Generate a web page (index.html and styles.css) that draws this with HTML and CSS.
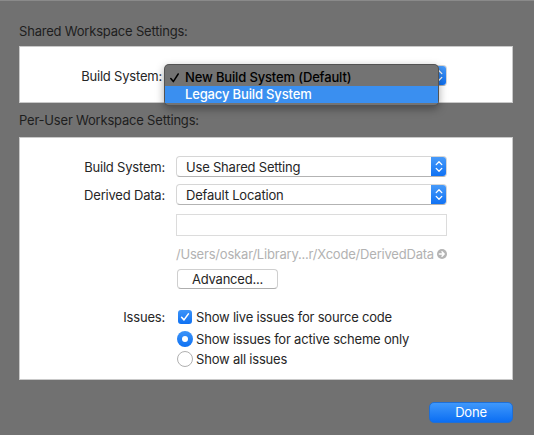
FILE: index.html
```html
<!DOCTYPE html>
<html>
<head>
<meta charset="utf-8">
<link rel="stylesheet" href="styles.css">
</head>
<body>
<div class="window">
  <div class="section-title">Shared Workspace Settings:</div>
  <div class="box box-shared">
    <div class="row">
      <span class="label label-shared">Build System:</span>
      <div class="popup">
        <span class="popup-text"></span>
        <span class="stepper">
          <svg width="16" height="21" viewBox="0 0 16 21"><path d="M5.2 8.6 L8 5.8 L10.8 8.6 M5.2 12.4 L8 15.2 L10.8 12.4" fill="none" stroke="#fff" stroke-width="1.3" stroke-linecap="round" stroke-linejoin="round"/></svg>
        </span>
      </div>
    </div>
    <div class="menu">
      <div class="menu-item"><span class="check"><svg width="9" height="10" viewBox="0 0 9 10"><path d="M0.8 5.6 L3.3 8.6 L8.2 1" fill="none" stroke="#000" stroke-width="1.5" stroke-linecap="round" stroke-linejoin="round"/></svg></span>New Build System (Default)</div>
      <div class="menu-item selected"><span class="check"></span>Legacy Build System</div>
    </div>
  </div>

  <div class="section-title title-user">Per-User Workspace Settings:</div>
  <div class="box box-user">
    <div class="row">
      <span class="label">Build System:</span>
      <div class="popup">
        <span class="popup-text">Use Shared Setting</span>
        <span class="stepper">
          <svg width="16" height="21" viewBox="0 0 16 21"><path d="M5.2 8.6 L8 5.8 L10.8 8.6 M5.2 12.4 L8 15.2 L10.8 12.4" fill="none" stroke="#fff" stroke-width="1.3" stroke-linecap="round" stroke-linejoin="round"/></svg>
        </span>
      </div>
    </div>
    <div class="row row-derived">
      <span class="label">Derived Data:</span>
      <div class="popup">
        <span class="popup-text">Default Location</span>
        <span class="stepper">
          <svg width="16" height="21" viewBox="0 0 16 21"><path d="M5.2 8.6 L8 5.8 L10.8 8.6 M5.2 12.4 L8 15.2 L10.8 12.4" fill="none" stroke="#fff" stroke-width="1.3" stroke-linecap="round" stroke-linejoin="round"/></svg>
        </span>
      </div>
    </div>
    <div class="row row-field">
      <span class="label"></span>
      <div class="textfield"></div>
    </div>
    <div class="row row-path">
      <span class="label"></span>
      <div class="path">
        <span>/Users/oskar/Library...r/Xcode/DerivedData</span>
        <svg class="go" width="10" height="10" viewBox="0 0 10 10"><circle cx="5" cy="5" r="5" fill="#b4b4b4"/><path d="M2.3 5 H7.2 M5 2.8 L7.2 5 L5 7.2" fill="none" stroke="#fff" stroke-width="1.4" stroke-linecap="round" stroke-linejoin="round"/></svg>
      </div>
    </div>
    <div class="row row-adv">
      <span class="label"></span>
      <div class="button">Advanced...</div>
    </div>
    <div class="row row-issues">
      <span class="label">Issues:</span>
      <div class="option">
        <span class="checkbox"><svg width="14" height="14" viewBox="0 0 14 14"><path d="M3.6 7.3 L6 9.9 L10.4 3.9" fill="none" stroke="#fff" stroke-width="1.6" stroke-linecap="round" stroke-linejoin="round"/></svg></span>
        <span>Show live issues for source code</span>
      </div>
    </div>
    <div class="row row-radio1">
      <span class="label"></span>
      <div class="option">
        <span class="radio on"></span>
        <span>Show issues for active scheme only</span>
      </div>
    </div>
    <div class="row row-radio2">
      <span class="label"></span>
      <div class="option">
        <span class="radio"></span>
        <span>Show all issues</span>
      </div>
    </div>
  </div>

  <div class="footer">
    <div class="done">Done</div>
  </div>
</div>
</body>
</html>
```

FILE: styles.css
```css
html, body {
  margin: 0;
  padding: 0;
}

body {
  background: #717171;
  font-family: Inter, "Noto Sans", "Liberation Sans", sans-serif;
  font-size: 13px;
  letter-spacing: -0.2px;
  color: #262626;
}

.window {
  width: 534px;
  height: 435px;
  box-sizing: border-box;
  border-top: 1px solid #8a8a8a;
  padding: 22px 21px 0 19px;
}

.section-title {
  line-height: 16px;
  height: 16px;
  color: #1e1e1e;
}

.title-user {
  margin-top: 9px;
}

.box {
  background: #fff;
  border: 1px solid #c9c9c9;
  margin-top: 7px;
  box-sizing: border-box;
}

.box-shared {
  position: relative;
  height: 57px;
  padding-top: 18px;
}

.box-user {
  height: 243px;
  margin-top: 9px;
  padding-top: 18px;
}

.row {
  display: flex;
  align-items: center;
}

.label {
  width: 145px;
  flex: none;
  text-align: right;
  margin-right: 11px;
  line-height: 16px;
}

.label-shared {
  width: 142px;
  margin-right: 14px;
}

.popup {
  width: 271px;
  height: 21px;
  box-sizing: border-box;
  background: #fff;
  border: 1px solid #d6d6d6;
  border-bottom-color: #b3b3b3;
  border-radius: 4px;
  display: flex;
  align-items: center;
  justify-content: space-between;
  overflow: hidden;
}

.popup-text {
  padding-left: 9px;
  line-height: 16px;
}

.stepper {
  width: 16px;
  height: 21px;
  margin-right: -1px;
  margin-top: -1px;
  margin-bottom: -1px;
  background: linear-gradient(#4a9cf9, #0d70f4);
  border-radius: 0 4px 4px 0;
  display: flex;
}

.row-derived {
  margin-top: 7px;
}

.row-field {
  margin-top: 9px;
}

.textfield {
  width: 271px;
  height: 22px;
  box-sizing: border-box;
  border: 1px solid #dcdcdc;
}

.row-path {
  margin-top: 10px;
}

.path {
  width: 271px;
  display: flex;
  align-items: center;
  justify-content: space-between;
  color: #b2b2b2;
  line-height: 16px;
}

.go {
  flex: none;
}

.row-adv {
  margin-top: 7px;
}

.button {
  margin-left: 1px;
  width: 101px;
  height: 20px;
  box-sizing: border-box;
  border: 1px solid #cfcfcf;
  border-bottom-color: #aeaeae;
  border-radius: 4px;
  background: #fff;
  text-align: center;
  line-height: 18px;
}

.row-issues {
  margin-top: 20px;
}

.row-radio1 {
  margin-top: 6px;
}

.row-radio2 {
  margin-top: 4px;
}

.option {
  display: flex;
  align-items: center;
  line-height: 16px;
}

.checkbox {
  width: 14px;
  height: 14px;
  margin-left: 2px;
  margin-right: 4px;
  border-radius: 3px;
  background: linear-gradient(#3d94f8, #0e71f3);
  display: flex;
}

.radio {
  width: 16px;
  height: 16px;
  box-sizing: border-box;
  margin-left: 1px;
  margin-right: 3px;
  border-radius: 50%;
  border: 1px solid #b0b0b0;
  background: #fff;
  position: relative;
}

.radio.on {
  border: none;
  background: linear-gradient(#3d94f8, #0e71f3);
}

.radio.on::after {
  content: "";
  position: absolute;
  left: 5px;
  top: 5px;
  width: 6px;
  height: 6px;
  border-radius: 50%;
  background: #fff;
}

.footer {
  margin-top: 22px;
  display: flex;
  justify-content: flex-end;
}

.done {
  width: 84px;
  height: 21px;
  box-sizing: border-box;
  border-radius: 5px;
  background: linear-gradient(#3f98fb, #0b6ef3);
  border: 1px solid #1f6fd6;
  color: #fff;
  text-align: center;
  line-height: 19px;
}

.menu {
  position: absolute;
  left: 144px;
  top: 17px;
  width: 275px;
  height: 42px;
  box-sizing: border-box;
  padding-top: 4px;
  background: #737373;
  border: 1px solid rgba(0, 0, 0, 0.28);
  border-radius: 5px;
  box-shadow: 0 3px 9px rgba(0, 0, 0, 0.35);
  font-weight: 500;
  letter-spacing: -0.15px;
  color: #000;
}

.menu-item {
  height: 17px;
  line-height: 17px;
  display: flex;
  align-items: center;
}

.menu-item.selected {
  background: #3a8ff0;
  color: #fff;
}

.check {
  width: 20px;
  height: 17px;
  padding-left: 5px;
  box-sizing: border-box;
  flex: none;
  display: flex;
  align-items: center;
}
```
